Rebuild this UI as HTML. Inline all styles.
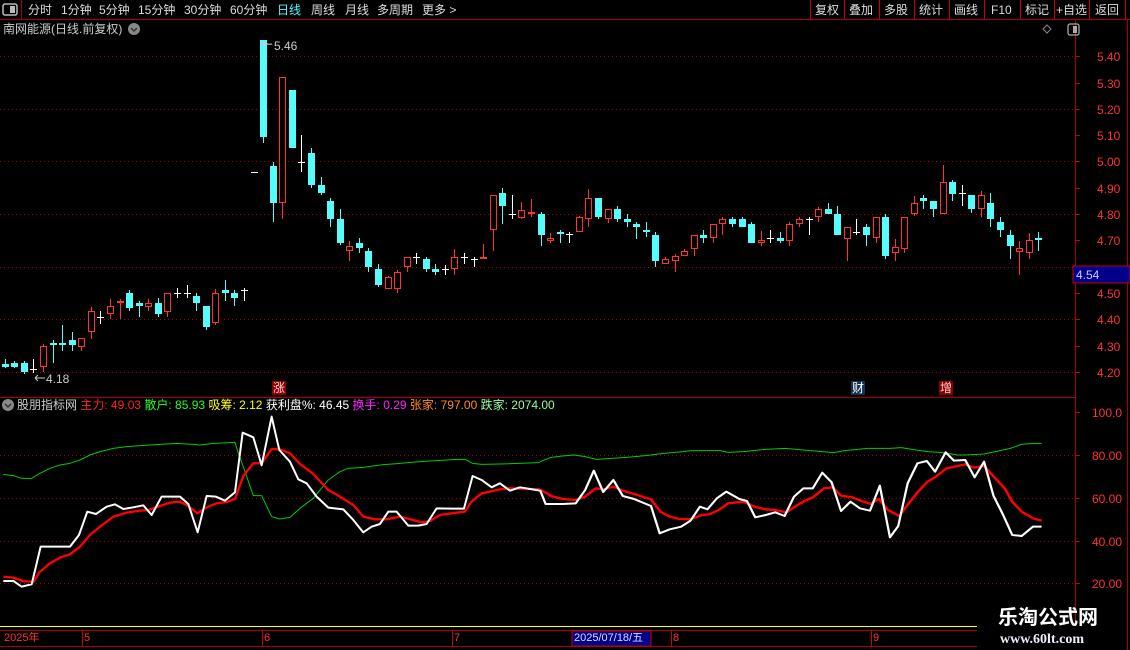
<!DOCTYPE html>
<html><head><meta charset="utf-8"><style>
*{margin:0;padding:0;box-sizing:border-box}
body{width:1130px;height:650px;background:#000;overflow:hidden;position:relative;font-family:"Liberation Sans","Noto Sans CJK SC",sans-serif;color:#ddd}
.t{position:absolute;white-space:nowrap;font-size:12px;line-height:14px}
svg{position:absolute;left:0;top:0}
</style></head><body>
<svg id="s" width="1130" height="650" xmlns="http://www.w3.org/2000/svg">
<g stroke="#a00" stroke-width="1" fill="none">
<line x1="0" y1="19.5" x2="1130" y2="19.5"/>
<line x1="0" y1="397.5" x2="1075" y2="397.5"/>
<line x1="1075.5" y1="20" x2="1075.5" y2="625"/>
<line x1="1127.5" y1="20" x2="1127.5" y2="650"/>
<line x1="21.5" y1="0" x2="21.5" y2="19"/>
<line x1="0" y1="630.5" x2="977" y2="630.5"/>
<line x1="0" y1="646.5" x2="977" y2="646.5"/>
</g>
<line x1="0" y1="626.5" x2="977" y2="626.5" stroke="#ff0" stroke-width="1"/>
<g stroke="#a00" stroke-dasharray="1,3">
<line x1="0" y1="56.5" x2="1075" y2="56.5"/><line x1="0" y1="109.5" x2="1075" y2="109.5"/>
<line x1="0" y1="161.5" x2="1075" y2="161.5"/><line x1="0" y1="214.5" x2="1075" y2="214.5"/>
<line x1="0" y1="267.5" x2="1075" y2="267.5"/><line x1="0" y1="319.5" x2="1075" y2="319.5"/>
<line x1="0" y1="372.5" x2="1075" y2="372.5"/>
<line x1="0" y1="455.5" x2="1075" y2="455.5"/><line x1="0" y1="498.5" x2="1075" y2="498.5"/>
<line x1="0" y1="541.5" x2="1075" y2="541.5"/><line x1="0" y1="583.5" x2="1075" y2="583.5"/>
</g>
<g stroke="#c00"><line x1="1075" y1="56.5" x2="1080" y2="56.5"/><line x1="1075" y1="83.5" x2="1080" y2="83.5"/><line x1="1075" y1="109.5" x2="1080" y2="109.5"/><line x1="1075" y1="135.5" x2="1080" y2="135.5"/><line x1="1075" y1="161.5" x2="1080" y2="161.5"/><line x1="1075" y1="188.5" x2="1080" y2="188.5"/><line x1="1075" y1="214.5" x2="1080" y2="214.5"/><line x1="1075" y1="240.5" x2="1080" y2="240.5"/><line x1="1075" y1="293.5" x2="1080" y2="293.5"/><line x1="1075" y1="319.5" x2="1080" y2="319.5"/><line x1="1075" y1="346.5" x2="1080" y2="346.5"/><line x1="1075" y1="372.5" x2="1080" y2="372.5"/>
<line x1="1075" y1="412.5" x2="1080" y2="412.5"/><line x1="1075" y1="455.5" x2="1080" y2="455.5"/><line x1="1075" y1="498.5" x2="1080" y2="498.5"/><line x1="1075" y1="541.5" x2="1080" y2="541.5"/><line x1="1075" y1="583.5" x2="1080" y2="583.5"/></g>
<g id="c"></g>
<g fill="none" stroke-linejoin="round">
<g transform="translate(0,400) scale(0.3333)">
<polyline stroke="#0c0" stroke-width="3" points="10,223 40,227 65,235 95,235 120,220 150,205 180,195 210,190 240,180 270,165 300,155 340,145 380,140 420,137 480,133 530,130 580,133 600,135 640,130 705,127 715,160 730,200 760,287 785,287 815,350 840,357 870,352 900,325 940,295 985,240 1020,215 1045,205 1090,202 1140,195 1200,190 1260,185 1310,182 1370,178 1395,178 1418,190 1445,193 1500,192 1620,188"/>
<polyline stroke="#f00" stroke-width="7" points="10,530 40,533 70,543 100,546 120,515 150,490 180,473 210,463 240,440 270,405 300,380 340,350 380,338 420,332 445,330 480,318 510,308 540,305 565,318 593,340 620,322 650,310 680,306 705,297 730,228 760,190 785,190 815,147 840,148 870,160 900,192 940,222 985,270 1020,290 1060,315 1090,350 1125,358 1160,358 1200,350 1240,360 1265,367 1290,363 1320,345 1355,340 1395,335 1415,305 1445,280 1470,275 1500,268 1530,265 1620,268"/>
<polyline stroke="#fff" stroke-width="6" points="10,543 40,543 65,560 95,553 122,440 210,440 237,405 262,335 288,342 320,320 345,313 370,327 400,322 430,316 455,345 485,290 540,290 565,312 593,397 620,288 648,290 675,302 705,277 728,98 760,112 785,196 815,50 838,150 870,185 895,238 920,250 950,290 985,323 1030,328 1060,360 1090,397 1115,380 1140,372 1165,335 1190,335 1225,377 1255,377 1280,372 1310,325 1355,326 1392,326 1418,228 1445,240 1475,262 1500,250 1530,272 1560,262 1620,272"/>
</g>
<g transform="translate(540,400) scale(0.3763,0.3333)">
<polyline stroke="#0c0" stroke-width="3" points="0,185 30,172 60,168 90,165 120,170 150,178 190,175 230,172 280,167 330,160 380,155 400,152 480,152 500,157 540,155 600,148 650,145 700,150 750,155 780,158 810,152 870,145 930,145 960,143 1000,150 1030,155 1070,158 1110,165 1130,165 1180,162 1210,155 1250,145 1280,133 1310,130 1333,130"/>
<polyline stroke="#f00" stroke-width="7" points="0,268 30,288 60,297 95,300 120,290 148,265 170,268 195,260 220,272 250,282 295,298 320,335 345,350 370,357 400,358 430,345 450,343 475,330 500,310 540,305 570,320 600,328 625,330 655,337 680,318 705,302 725,292 755,265 778,262 800,287 830,292 860,305 880,312 900,297 925,330 955,348 980,310 1005,275 1030,245 1050,232 1080,205 1110,198 1130,193 1155,203 1180,198 1210,235 1235,265 1255,305 1280,335 1310,355 1333,362"/>
<polyline stroke="#fff" stroke-width="6" points="0,270 15,312 60,312 95,310 120,270 143,212 168,276 195,240 220,288 250,297 295,318 318,400 345,388 375,380 400,362 425,320 445,328 470,295 495,275 530,297 550,303 572,352 600,345 625,337 650,348 675,290 700,265 725,265 750,218 775,247 800,333 825,305 850,325 877,332 903,257 930,412 952,378 977,250 1003,190 1028,183 1050,215 1078,157 1100,182 1130,180 1155,232 1180,185 1205,287 1230,343 1255,405 1280,408 1310,380 1333,380"/>
</g>
</g>
<rect x="1073" y="266" width="57" height="17" fill="#00008a" stroke="#c00"/>
<rect x="272" y="381" width="14" height="14" fill="#800"/>
<rect x="851" y="381" width="14" height="14" fill="#135"/>
<rect x="939" y="381" width="14" height="14" fill="#800"/>
<rect x="572" y="631" width="79" height="15" fill="#00008a" stroke="#c00"/>
<rect x="3" y="4" width="14" height="11" rx="2" fill="none" stroke="#bbb" stroke-width="1.5"/><rect x="10" y="6" width="5" height="7" fill="#bbb"/>
<rect x="1068" y="24" width="11" height="11" rx="2" fill="none" stroke="#aaa" stroke-width="1.3"/><rect x="1073" y="26" width="4" height="7" fill="#aaa"/>
<path d="M1047 25 l4 4 l-4 4 l-4 -4z" fill="none" stroke="#888"/>
<circle cx="134" cy="29" r="6" fill="#888"/><path d="M131 28 l3 3 l3 -3" stroke="#333" stroke-width="1.5" fill="none"/>
<circle cx="8" cy="405" r="6" fill="#888"/><path d="M5 404 l3 3 l3 -3" stroke="#333" stroke-width="1.5" fill="none"/>
<path d="M262 42 l6 2 M262 42 l3 4 M262 42 q4 3 10 2" stroke="#ccc" fill="none"/>
<path d="M35 378 h10 M35 378 l3 -3 M35 378 l3 3" stroke="#ccc" fill="none"/>
<g stroke="#c00"><line x1="810.5" y1="0" x2="810.5" y2="19"/><line x1="844.5" y1="0" x2="844.5" y2="19"/><line x1="879.5" y1="0" x2="879.5" y2="19"/><line x1="914.5" y1="0" x2="914.5" y2="19"/><line x1="949.5" y1="0" x2="949.5" y2="19"/><line x1="984.5" y1="0" x2="984.5" y2="19"/><line x1="1020.5" y1="0" x2="1020.5" y2="19"/><line x1="1054.5" y1="0" x2="1054.5" y2="19"/><line x1="1089.5" y1="0" x2="1089.5" y2="19"/><line x1="1125.5" y1="0" x2="1125.5" y2="19"/>
<line x1="82.5" y1="631" x2="82.5" y2="646"/><line x1="262.5" y1="631" x2="262.5" y2="646"/><line x1="452.5" y1="631" x2="452.5" y2="646"/><line x1="671.5" y1="631" x2="671.5" y2="646"/><line x1="871.5" y1="631" x2="871.5" y2="646"/></g>
</svg>
<script>
var d=[
['c',364,367,359,368],['c',363,367,361,368],['c',363,372,361,374],['w',369,369,359,373],['r',346,367,344,372],['c',343,345,340,363],['c',343,345,325,351],['c',340,345,332,351],['r',338,347,338,351],['r',311,332,307,339],['w',317,317,311,324],['r',306,314,299,319],['r',301,303,299,319],['c',293,308,290,311],['c',303,306,301,317],['r',303,307,299,311],['c',303,314,298,317],['r',293,312,293,317],['w',293,293,288,298],['w',293,293,285,298],['c',296,303,293,311],['c',306,327,306,330],['r',293,323,289,325],['c',290,293,280,301],['c',293,298,290,306],['w',290,290,288,301],['w',172,172,172,172],
['c',40,137,40,143],['c',166,203,162,222],['r',77,203,77,219],['c',90,148,90,148],['w',162,162,135,172],['c',153,185,148,188],['c',185,193,177,195],['c',201,219,198,227],['c',219,243,209,245],['r',246,251,241,261],['c',243,248,238,253],['c',251,267,248,272],['c',269,285,264,287],['r',277,289,276,289],['r',272,289,270,293],['r',257,267,257,272],['w',257,257,253,264],['c',259,269,257,272],['c',269,272,264,275],['w',269,269,265,275],['r',257,269,249,275],['w',257,257,253,264],['w',259,259,257,267],['r',257,259,244,259],['r',195,230,195,251],['c',193,206,188,224],['w',214,214,195,219],['r',210,218,202,219],
['r',212,214,199,217],['c',214,235,212,246],['r',238,241,233,243],['c',232,234,230,243],['w',234,234,232,243],['r',217,232,216,232],['r',198,219,189,227],['c',198,217,198,219],['r',209,219,209,223],['c',209,219,206,222],['c',219,222,214,227],['c',224,227,222,239],['c',230,232,222,237],['c',235,261,232,267],['r',259,264,257,264],['r',256,261,254,272],['r',251,256,249,256],['r',235,249,235,256],['c',235,238,230,243],['r',224,238,224,243],['r',219,224,217,235],['c',219,224,217,227],['c',219,227,217,227],['c',224,243,222,243],['r',240,243,231,246],['w',238,238,230,243],['c',238,241,232,243],['r',224,241,222,246],['r',219,224,217,227],['w',219,219,217,235],['r',209,217,207,222],['c',209,214,203,214],['c',214,235,206,235],['r',227,239,227,261],['w',232,232,219,235],['c',227,235,224,246],['r',217,238,217,243],['c',217,256,214,259],['r',247,253,239,261],['r',217,249,217,253],['r',203,214,196,216],['c',198,201,195,209],['c',201,209,201,217],['r',182,214,165,214],['c',182,194,180,201],['w',193,193,185,206],['c',195,209,195,213],['r',195,209,191,217],['c',203,219,193,227],['c',222,230,217,237],['c',235,246,230,259],['r',248,252,241,275],['r',240,253,233,259],['c',238,240,232,251]];
var s='';
for(var i=0;i<d.length;i++){var x=Math.round(4.7+9.57*i),e=d[i],t=e[1],b=e[2];if(b-t<2&&e[0]!='w'){b=t+2}
var col=e[0]=='c'?'#54fcfc':e[0]=='r'?'#ff3232':'#fff';
s+='<line x1="'+(x+.5)+'" y1="'+e[3]+'" x2="'+(x+.5)+'" y2="'+e[4]+'" stroke="'+col+'"/>';
if(e[0]=='c')s+='<rect x="'+(x-3)+'" y="'+t+'" width="7" height="'+(b-t)+'" fill="'+col+'"/>';
else if(e[0]=='r')s+='<rect x="'+(x-2.5)+'" y="'+(t+.5)+'" width="6" height="'+(b-t-1)+'" fill="#000" stroke="'+col+'"/>';
else s+='<line x1="'+(x-3)+'" y1="'+(t+.5)+'" x2="'+(x+4)+'" y2="'+(t+.5)+'" stroke="'+col+'"/>';}
document.getElementById('c').innerHTML=s;
</script>
<div class="t" style="left:28px;top:3px">分时</div>
<div class="t" style="left:61px;top:3px">1分钟</div>
<div class="t" style="left:99px;top:3px">5分钟</div>
<div class="t" style="left:138px;top:3px">15分钟</div>
<div class="t" style="left:184px;top:3px">30分钟</div>
<div class="t" style="left:230px;top:3px">60分钟</div>
<div class="t" style="left:277px;top:3px;color:#4ff">日线</div>
<div class="t" style="left:311px;top:3px">周线</div>
<div class="t" style="left:345px;top:3px">月线</div>
<div class="t" style="left:377px;top:3px">多周期</div>
<div class="t" style="left:422px;top:3px">更多 &gt;</div>
<div class="t" style="left:815px;top:3px">复权</div>
<div class="t" style="left:849px;top:3px">叠加</div>
<div class="t" style="left:884px;top:3px">多股</div>
<div class="t" style="left:919px;top:3px">统计</div>
<div class="t" style="left:954px;top:3px">画线</div>
<div class="t" style="left:991px;top:3px">F10</div>
<div class="t" style="left:1025px;top:3px">标记</div>
<div class="t" style="left:1056px;top:3px">+自选</div>
<div class="t" style="left:1095px;top:3px">返回</div>
<div class="t" style="left:3px;top:22px;color:#ccc">南网能源(日线.前复权)</div>
<div class="t" style="left:274px;top:39px;color:#ccc">5.46</div>
<div class="t" style="left:46px;top:372px;color:#ccc">4.18</div>
<div class="t" style="left:273px;top:381px;color:#fcc">涨</div>
<div class="t" style="left:852px;top:381px;color:#fff">财</div>
<div class="t" style="left:940px;top:381px;color:#fcc">增</div>
<div class="t" style="left:1097px;top:50px;color:#f33">5.40</div>
<div class="t" style="left:1097px;top:77px;color:#f33">5.30</div>
<div class="t" style="left:1097px;top:103px;color:#f33">5.20</div>
<div class="t" style="left:1097px;top:129px;color:#f33">5.10</div>
<div class="t" style="left:1097px;top:155px;color:#f33">5.00</div>
<div class="t" style="left:1097px;top:182px;color:#f33">4.90</div>
<div class="t" style="left:1097px;top:208px;color:#f33">4.80</div>
<div class="t" style="left:1097px;top:234px;color:#f33">4.70</div>
<div class="t" style="left:1097px;top:287px;color:#f33">4.50</div>
<div class="t" style="left:1097px;top:313px;color:#f33">4.40</div>
<div class="t" style="left:1097px;top:340px;color:#f33">4.30</div>
<div class="t" style="left:1097px;top:366px;color:#f33">4.20</div>
<div class="t" style="left:1076px;top:268px;color:#ccf">4.54</div>
<div class="t" style="left:1092px;top:406px;color:#f33">100.0</div>
<div class="t" style="left:1092px;top:449px;color:#f33">80.00</div>
<div class="t" style="left:1092px;top:492px;color:#f33">60.00</div>
<div class="t" style="left:1092px;top:535px;color:#f33">40.00</div>
<div class="t" style="left:1092px;top:577px;color:#f33">20.00</div>
<div class="t" style="left:17px;top:398px;color:#ccc">股朋指标网 <span style="color:#f22">主力: 49.03</span> <span style="color:#2f2">散户: 85.93</span> <span style="color:#ff2">吸筹: 2.12</span> <span style="color:#fff">获利盘%: 46.45</span> <span style="color:#f2f">换手: 0.29</span> <span style="color:#f82">张家: 797.00</span> <span style="color:#9f9">跌家: 2074.00</span></div>
<div class="t" style="left:4px;top:631px;color:#f33;font-size:11px">2025年</div>
<div class="t" style="left:84px;top:631px;color:#f33;font-size:11px">5</div>
<div class="t" style="left:264px;top:631px;color:#f33;font-size:11px">6</div>
<div class="t" style="left:454px;top:631px;color:#f33;font-size:11px">7</div>
<div class="t" style="left:574px;top:631px;color:#ddf;font-size:11px">2025/07/18/五</div>
<div class="t" style="left:673px;top:631px;color:#f33;font-size:11px">8</div>
<div class="t" style="left:873px;top:631px;color:#f33;font-size:11px">9</div>
<div class="t" style="left:998px;top:606px;color:#fff;font-size:20px;line-height:24px;font-weight:bold">乐淘公式网</div>
<div class="t" style="left:1000px;top:632px;color:#eef;font-size:14px;line-height:16px;font-weight:bold;font-family:'Liberation Serif',serif">www.60lt.com</div>
</body></html>
